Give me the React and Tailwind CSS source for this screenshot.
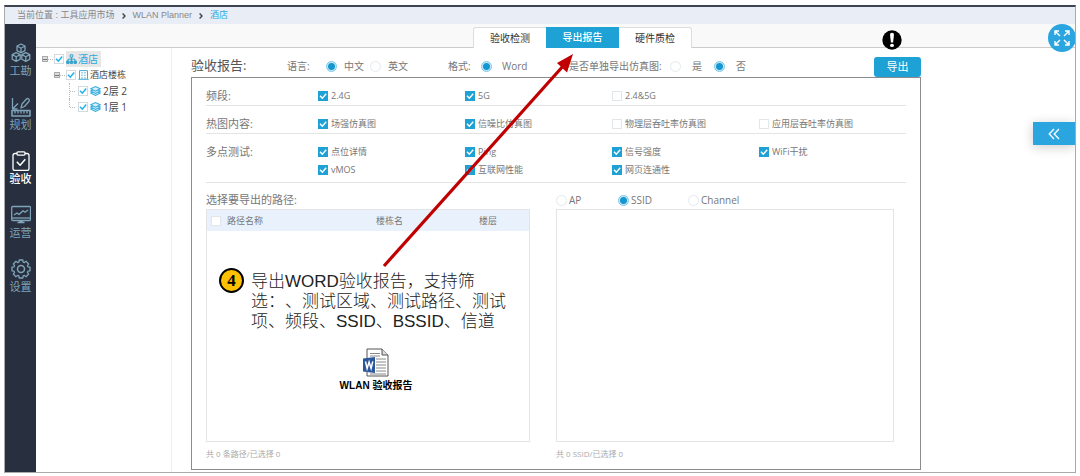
import React from "react";

const UI = "font-['Open_Sans','Noto_Sans_CJK_SC',sans-serif]";

function Check({ id, label, checked = false }) {
  return (
    <label htmlFor={id} className="flex items-center gap-[3px] text-[9px] whitespace-nowrap text-[#777]">
      <CheckBox id={id} checked={checked} />
      {label}
    </label>
  );
}

function CheckBox({ id, checked = false, ...rest }) {
  return (
    <span className="grid size-[10px] shrink-0">
      <input
        id={id}
        type="checkbox"
        defaultChecked={checked}
        className="peer m-0 size-[10px] appearance-none border border-[#e0e6ea] bg-white [grid-area:1/1] checked:border-[#1ea1d4] checked:bg-[#1ea1d4]"
        {...rest}
      />
      <svg viewBox="0 0 10 10" className="pointer-events-none invisible size-[10px] [grid-area:1/1] peer-checked:visible" fill="none" stroke="#fff" strokeWidth="1.4">
        <path d="M2 4.8 4.3 7.2 8.2 2.8" />
      </svg>
    </span>
  );
}

function TreeCheck(props) {
  return (
    <span className="grid size-[10px] shrink-0">
      <input type="checkbox" defaultChecked className="peer m-0 size-[10px] appearance-none border border-[#d4dade] bg-white [grid-area:1/1]" {...props} />
      <svg viewBox="0 0 10 10" className="pointer-events-none invisible size-[10px] [grid-area:1/1] peer-checked:visible" fill="none" stroke="#1fb0ee" strokeWidth="1.5">
        <path d="M2 4.8 4.3 7.2 8.2 2.6" />
      </svg>
    </span>
  );
}

function Radio({ id, name, label, checked = false, gap = "gap-[2px]" }) {
  return (
    <label htmlFor={id} className={`flex items-center text-[10px] whitespace-nowrap ${gap}`}>
      <input
        id={id}
        name={name}
        type="radio"
        defaultChecked={checked}
        className="m-0 size-[11px] shrink-0 appearance-none rounded-full border border-[#e3eaec] bg-white checked:border-[#7cc8e6] checked:bg-[radial-gradient(circle,#1497d0_0_3px,#c3e7f4_4px)]"
      />
      {label}
    </label>
  );
}

const cube = (x, y) => `M${x} ${y}l4 2v4.6l-4 2.2-4-2.2V${y + 2}zM${x - 4} ${y + 2}l4 2.2 4-2.2M${x} ${y + 4.2}v4.6`;

const gear = () => {
  const pts = [];
  for (let i = 0; i < 8; i++) {
    const a = (i * Math.PI) / 4;
    [[-0.3, 7.3], [-0.2, 9.2], [0.2, 9.2], [0.3, 7.3]].forEach(([d, r]) => {
      pts.push(`${(10 + r * Math.sin(a + d)).toFixed(2)} ${(10 - r * Math.cos(a + d)).toFixed(2)}`);
    });
  }
  return `M${pts.join("L")}z`;
};

const navItems = [
  {
    label: "工勘",
    icon: <path d={`${cube(10, 1)}${cube(5.2, 9.6)}${cube(14.8, 9.6)}`} />,
  },
  {
    label: "规划",
    icon: (
      <>
        <path d="M1.5 1v11h5M1.5 12 7 6.5" />
        <path d="m10 11 1-4 4.5-5q1-1 2.2 0 1.2 1 .4 2.2L13.5 9.5 10 11z" />
        <path d="M1 13.5h18v5.5H1z" strokeWidth="1.6" />
        <path d="M4 14v2.5M7 14v2.5M10 14v2.5M13 14v2.5M16 14v2.5" />
      </>
    ),
  },
  {
    label: "验收",
    active: true,
    icon: (
      <>
        <path d="M6 2.5H4Q2 2.5 2 4.5v13q0 2 2 2h12q2 0 2-2v-13q0-2-2-2h-2" />
        <path d="M7 .8h6q1 0 1 1v1q0 1.4-1 1.4H7q-1 0-1-1.4v-1q0-1 1-1z" />
        <path d="m5.8 10.8 3.3 3.5 5.2-6" strokeWidth="1.5" />
      </>
    ),
  },
  {
    label: "运营",
    icon: (
      <>
        <rect x=".7" y="1.5" width="18.8" height="14" rx="1" />
        <path d="M1 13h18" />
        <path d="m3 10 3-2 2 1.5 4-3.8 2 1.5 3-2.2" />
        <path d="M6.5 17.5h7M8 16.3h4" />
      </>
    ),
  },
  {
    label: "设置",
    icon: (
      <>
        <path d={gear()} />
        <circle cx="10" cy="10" r="3.5" strokeWidth="1.5" />
      </>
    ),
  },
];

function Sidebar() {
  return (
    <nav className="flex w-[31px] shrink-0 flex-col items-center gap-[18px] bg-[#28303f] pt-[19px]">
      {navItems.map((n) => (
        <a key={n.label} href="#" className={`flex flex-col items-center ${n.active ? "font-medium text-white" : "text-[#7fa3b8]"}`}>
          <svg viewBox="0 0 20 20" className="size-5" fill="none" stroke="currentColor" strokeWidth="1.3" strokeLinejoin="round">
            {n.icon}
          </svg>
          <span className="text-[11px] leading-4">{n.label}</span>
        </a>
      ))}
    </nav>
  );
}

function Expander() {
  return (
    <button type="button" aria-label="展开" className="flex size-[6px] shrink-0 items-center justify-center border border-[#aaa] bg-[#ddd]">
      <span className="h-px w-[4px] bg-[#777]" />
    </button>
  );
}

function Layers() {
  return (
    <svg viewBox="0 0 11 10" className="h-[10px] w-[11px]" fill="#d9f1fb" stroke="#35ace0" strokeWidth="1.1">
      <path d="M.8 7 5.5 9.400 10.200 7 5.500 4.800z" />
      <path d="M.8 5 5.500 7.400 10.200 5 5.500 2.800z" />
      <path d="M.8 2.800 5.500 5.200 10.200 2.800 5.500.6z" />
    </svg>
  );
}

function Tree() {
  return (
    <aside className="w-[136px] shrink-0 border-r border-[#eee] pt-[3px] pl-[6px] text-[10px] leading-4 text-[#444]">
      <div className="flex items-center">
        <Expander />
        <span className="mr-px w-[5px] border-t border-dotted border-[#bbb]" />
        <TreeCheck aria-label="酒店" />
        <a href="#" className="ml-[2px] flex items-center gap-px bg-[#e7e7e7] pr-[3px] text-[#2ba9e1]">
          <svg viewBox="0 0 11 10" className="h-[10px] w-[11px]" fill="none" stroke="#35a3cf">
            <path d="M4.200 .8h2.600v2.400H4.200zM5.500 3v5M2 8V5.200h7V8" />
            <path d="M.7 7h2.400v2.400H.7zM4.300 7h2.400v2.400H4.300zM8 7h2.400v2.400H8z" fill="#35a3cf" />
          </svg>
          酒店
        </a>
      </div>
      <div className="flex items-center pl-3">
        <Expander />
        <span className="mr-px w-[5px] border-t border-dotted border-[#bbb]" />
        <TreeCheck aria-label="酒店楼栋" />
        <svg viewBox="0 0 11 10" className="mr-px ml-[2px] h-[10px] w-[11px]" fill="none" stroke="#35a3cf" strokeWidth=".9">
          <path d="M1.500 9V.6h8V9M.3 9.300h10.400M4 2v1.500M7 2v1.500M4 4.600v1.500M7 4.600v1.500M4 7.200V9M7 7.200V9" />
        </svg>
        <span className="text-[9px]">酒店楼栋</span>
      </div>
      {["2层 2", "1层 1"].map((t, i) => (
        <div key={t} className="flex items-center pl-[27px]">
          <span className={`w-px border-l border-dotted border-[#bbb] ${i ? "h-2 self-start" : "h-4"}`} />
          <span className="mr-[3px] w-[5px] border-t border-dotted border-[#bbb]" />
          <TreeCheck aria-label={t} />
          <span className="mx-[2px]">
            <Layers />
          </span>
          {t}
        </div>
      ))}
    </aside>
  );
}

function TabBar() {
  const tab = "h-[21px] w-[73px] text-[10px]";
  return (
    <div className="relative flex h-6 shrink-0 items-end justify-center border-b border-[#ccc] bg-[#f9f9f9] pl-[54px]">
      <div role="tablist" className="-mb-px flex text-[#333]">
        <button role="tab" type="button" className={`${tab} rounded-tl-[3px] border-t border-l border-[#ddd] bg-white`}>验收检测</button>
        <button role="tab" type="button" aria-selected="true" className={`${tab} bg-[#1ea1d4] font-medium text-white`}>导出报告</button>
        <button role="tab" type="button" className={`${tab} rounded-tr-[3px] border-t border-r border-[#ddd] bg-white`}>硬件质检</button>
      </div>
      <svg viewBox="0 0 20 20" className="absolute top-[6px] right-[173px] size-5">
        <circle cx="10" cy="10" r="9.700" />
        <path d="M8 4.600Q8 2.800 10 2.800T12 4.600L11.100 12.500H8.900z" fill="#fff" />
        <ellipse cx="10" cy="15.400" rx="2" ry="1.700" fill="#fff" />
      </svg>
      <button type="button" aria-label="全屏" className="absolute top-0 -right-px flex size-7 items-center justify-center rounded-full bg-[#2ba5df]">
        <svg viewBox="0 0 16 16" className="size-4" fill="none" stroke="#fff" strokeWidth="1.400">
          <path d="M6 6 1.200 1.200M1 5V1h4M10 6l4.800-4.800M11 1h4v4M6 10l-4.800 4.800M1 11v4h4M10 10l4.800 4.800M15 11v4h-4" />
        </svg>
      </button>
    </div>
  );
}

const rows = [
  { title: "频段:", items: [["2.4G", true], ["5G", true], ["2.4&5G", false]] },
  { title: "热图内容:", items: [["场强仿真图", true], ["信噪比仿真图", true], ["物理层吞吐率仿真图", false], ["应用层吞吐率仿真图", false]] },
  {
    title: "多点测试:",
    last: true,
    items: [["点位详情", true], ["Ping", true], ["信号强度", true], ["WiFi干扰", true], ["vMOS", true], ["互联网性能", true], ["网页连通性", true]],
  },
];

function WordNote() {
  return (
    <div className="absolute top-[62px] left-3 w-[300px]">
      <div className="flex gap-[7px]">
        <span className="-mt-1 flex size-[25px] shrink-0 items-center justify-center rounded-full border-2 border-black bg-[#ffc000] font-['Liberation_Serif',serif] text-[17px] font-bold text-black">4</span>
        <p className="font-['Liberation_Sans','Noto_Sans_CJK_SC',sans-serif] text-[17px] leading-5 font-light whitespace-nowrap text-[#222] [text-spacing-trim:space-all]">
          导出WORD验收报告，支持筛
          <br />
          选：、测试区域、测试路径、测试
          <br />
          项、频段、SSID、BSSID、信道
        </p>
      </div>
      <a href="#" className="mt-4 ml-[112px] flex w-[90px] flex-col items-center font-['Liberation_Sans','Noto_Sans_CJK_SC',sans-serif] text-[10px] leading-[18px] font-bold whitespace-nowrap text-black">
        <svg viewBox="0 0 26 29" className="h-[29px] w-[26px]">
          <path d="M4 1h15l6 6v21H4z" fill="#fff" stroke="#555" />
          <path d="M19 1v6h6" fill="#ddd" stroke="#555" />
          <path d="M7 5.500h10M7 8h10M13 11h10M13 14h10M13 17h10M13 20h10M13 23h10M7 26h16" stroke="#888" />
          <path d="M0 10.500 12 9v16L0 23.500z" fill="#2b579a" />
          <path d="m2.500 13.500 1.600 7 2-6.500 2 6.500 1.700-7.200" fill="none" stroke="#fff" strokeWidth="1.500" />
        </svg>
        WLAN 验收报告
      </a>
    </div>
  );
}

function Report() {
  return (
    <section className="flex min-w-0 flex-1 flex-col pr-[154px] pb-[2px] pl-[19px] text-[#777]">
      <div className="mt-[7px] flex h-[22px] items-center text-[10px] whitespace-nowrap">
        <h1 className="w-24 text-[13px] text-[#555]">验收报告:</h1>
        <div role="radiogroup" aria-label="语言" className="flex w-[161px] items-center">
          <span className="w-[39px]">语言:</span>
          <Radio id="zh" name="lang" label="中文" checked gap="gap-[7px]" />
          <span className="w-[6px]" />
          <Radio id="en" name="lang" label="英文" gap="gap-[7px]" />
        </div>
        <div role="radiogroup" aria-label="格式" className="flex w-[121px] items-center">
          <span className="w-[33px]">格式:</span>
          <Radio id="word" name="format" label="Word" checked gap="gap-[10px]" />
        </div>
        <div role="radiogroup" aria-label="是否单独导出仿真图" className="flex items-center">
          <span className="w-[101px]">是否单独导出仿真图:</span>
          <Radio id="yes" name="single" label="是" gap="gap-[11px]" />
          <span className="w-3" />
          <Radio id="no" name="single" label="否" checked gap="gap-[11px]" />
        </div>
        <button type="button" className="ml-auto h-5 w-[47px] self-end rounded-[3px] bg-[#1ea1d4] text-[11px] text-white">导出</button>
      </div>

      <div className="flex flex-1 flex-col border border-[#8c8c8c] px-[14px] pb-[6px] leading-[18px]">
        {rows.map((r) => (
          <div key={r.title} role="group" aria-labelledby={r.title} className={`grid grid-cols-[112px_repeat(4,1fr)] border-b border-[#e4e4e4] pt-[9px] ${r.last ? "pb-[3px]" : ""}`}>
            <span id={r.title} className="text-[11px]">{r.title}</span>
            {r.items.map(([t, on], i) => (
              <React.Fragment key={t}>
                {i === 4 && <span />}
                <Check id={t} label={t} checked={on} />
              </React.Fragment>
            ))}
          </div>
        ))}

        <div className="grid flex-1 grid-cols-[324fr_338fr] gap-x-[26px] pt-2 pr-3">
          <div className="flex flex-col">
            <h2 className="text-[11px]">选择要导出的路径:</h2>
            <div className="relative min-h-[233px] flex-1 border border-[#e4e4e4]">
              <table className="w-full table-fixed text-left text-[9px]">
                <thead className="bg-[#e9f2fc]">
                  <tr className="h-[21px]">
                    <th className="w-5 pl-1"><CheckBox aria-label="全选路径" /></th>
                    <th className="font-normal">路径名称</th>
                    <th className="w-[103px] font-normal">楼栋名</th>
                    <th className="w-[50px] font-normal">楼层</th>
                  </tr>
                </thead>
              </table>
              <WordNote />
            </div>
            <p className="pt-[3px] text-[8px] text-[#aaa]">共 0 条路径/已选择 0</p>
          </div>
          <div className="flex flex-col">
            <div role="radiogroup" aria-label="类型" className="flex h-[18px] items-center">
              <span className="w-[62px]"><Radio id="ap" name="kind" label="AP" /></span>
              <span className="w-[70px]"><Radio id="ssid" name="kind" label="SSID" checked /></span>
              <Radio id="channel" name="kind" label="Channel" />
            </div>
            <div className="flex-1 border border-[#e4e4e4]" />
            <p className="pt-[3px] text-[8px] text-[#aaa]">共 0 SSID/已选择 0</p>
          </div>
        </div>
      </div>
    </section>
  );
}

function Chevron() {
  return (
    <svg viewBox="0 0 4 6" className="h-[6px] w-1" fill="none" stroke="#444" strokeWidth="1.400">
      <path d="M.6.5 3 3 .6 5.500" />
    </svg>
  );
}

export default function App() {
  return (
    <div className={`relative flex min-h-screen flex-col bg-white px-1 pt-[5px] pb-[3px] ${UI}`}>
      <div className="flex flex-1 flex-col border-t-2 border-r border-b border-l border-t-[#3d4350] border-r-[#aaa] border-b-[#aaa] border-l-[#aaa]">
        <nav aria-label="位置" className="flex h-[17px] items-center gap-[7px] bg-[#e9edf6] pl-3 font-['Liberation_Sans','Noto_Sans_CJK_SC',sans-serif] text-[9px] text-[#888]">
          <span>当前位置 : 工具应用市场</span>
          <Chevron />
          <a href="#">WLAN Planner</a>
          <Chevron />
          <a href="#" className="text-[#2ba9e1]">酒店</a>
        </nav>
        <div className="flex flex-1">
          <Sidebar />
          <main className="relative flex min-w-0 flex-1 flex-col overflow-hidden">
            <TabBar />
            <div className="flex flex-1">
              <Tree />
              <Report />
            </div>
            <button type="button" aria-label="收起" className="absolute top-[98px] right-0 flex h-[23px] w-[42px] items-center justify-center bg-[#2ba5df] shadow-[0_2px_12px_rgba(0,0,0,0.2)]">
              <svg viewBox="0 0 12 12" className="size-3" fill="none" stroke="#fff" strokeWidth="1.300">
                <path d="M6 1 1.200 6 6 11M11 1 6.200 6 11 11" />
              </svg>
            </button>
          </main>
        </div>
      </div>
      <svg viewBox="0 0 200 220" className="pointer-events-none absolute top-[50px] left-[380px] h-[220px] w-[200px]">
        <path d="M4 216 184 15" stroke="#c00000" strokeWidth="3.200" />
        <path d="M193 4 177 13l10 9.500z" fill="#c00000" />
      </svg>
    </div>
  );
}
